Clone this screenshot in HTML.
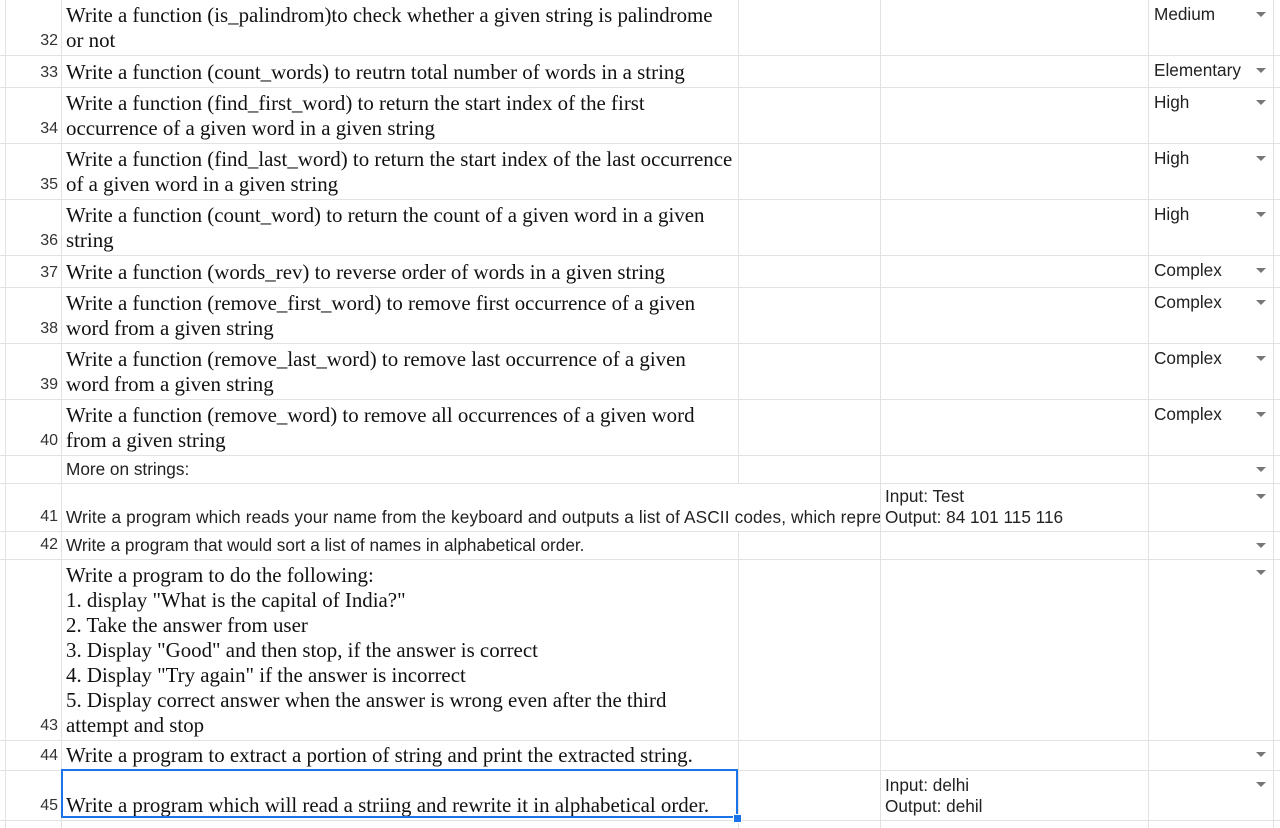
<!DOCTYPE html>
<html><head><meta charset="utf-8"><style>
body{margin:0;width:1280px;height:828px;overflow:hidden;background:#fff;position:relative;font-family:"Liberation Sans",Arial,sans-serif;color:#222}
.h{position:absolute;left:0;width:1280px;height:1px;background:#e2e2e2}
.v{position:absolute;top:0;height:828px;width:1px;background:#e2e2e2}
.c{position:absolute;display:flex;flex-direction:column;justify-content:flex-end;box-sizing:border-box;padding-bottom:2px;overflow:hidden;white-space:nowrap}
.s{font-family:"Liberation Serif","Times New Roman",serif;font-size:20.9px;line-height:25px;color:#111}
.n{font-size:16px;line-height:20px;text-align:right;color:#333;padding-bottom:4px}
.ss{font-size:17.2px;line-height:21px;padding-bottom:3px;color:#222}
.d{position:absolute;font-size:17.2px;color:#222}
.ar{position:absolute;width:0;height:0;border-left:5px solid transparent;border-right:5px solid transparent;border-top:5px solid #777}
</style></head><body>
<div class="v" style="left:5px"></div>
<div class="v" style="left:61px"></div>
<div class="v" style="left:738px"></div>
<div class="v" style="left:880px"></div>
<div class="v" style="left:1148px"></div>
<div class="v" style="left:1273px"></div>
<div class="h" style="top:55px"></div><div class="h" style="top:87px"></div><div class="h" style="top:143px"></div><div class="h" style="top:199px"></div><div class="h" style="top:255px"></div><div class="h" style="top:287px"></div><div class="h" style="top:343px"></div><div class="h" style="top:399px"></div><div class="h" style="top:455px"></div><div class="h" style="top:483px"></div><div class="h" style="top:531px"></div><div class="h" style="top:559px"></div><div class="h" style="top:740px"></div><div class="h" style="top:770px"></div><div class="h" style="top:820px"></div>

<div class="c n" style="top:0;height:55px;left:6px;width:52px">32</div>
<div class="c n" style="top:55px;height:32px;left:6px;width:52px">33</div>
<div class="c n" style="top:87px;height:56px;left:6px;width:52px">34</div>
<div class="c n" style="top:143px;height:56px;left:6px;width:52px">35</div>
<div class="c n" style="top:199px;height:56px;left:6px;width:52px">36</div>
<div class="c n" style="top:255px;height:32px;left:6px;width:52px">37</div>
<div class="c n" style="top:287px;height:56px;left:6px;width:52px">38</div>
<div class="c n" style="top:343px;height:56px;left:6px;width:52px">39</div>
<div class="c n" style="top:399px;height:56px;left:6px;width:52px">40</div>
<div class="c n" style="top:483px;height:48px;left:6px;width:52px">41</div>
<div class="c n" style="top:531px;height:28px;left:6px;width:52px">42</div>
<div class="c n" style="top:559px;height:181px;left:6px;width:52px">43</div>
<div class="c n" style="top:740px;height:30px;left:6px;width:52px">44</div>
<div class="c n" style="top:770px;height:50px;left:6px;width:52px">45</div>

<div class="c s" style="top:0;height:55px;left:66px;width:670px"><div>Write a function (is_palindrom)to check whether a given string is palindrome</div><div>or not</div></div>
<div class="c s" style="top:55px;height:32px;left:66px;width:670px">Write a function (count_words) to reutrn total number of words in a string</div>
<div class="c s" style="top:87px;height:56px;left:66px;width:670px"><div>Write a function (find_first_word) to return the start index of the first</div><div>occurrence of a given word in a given string</div></div>
<div class="c s" style="top:143px;height:56px;left:66px;width:672px"><div>Write a function (find_last_word) to return the start index of the last occurrence</div><div>of a given word in a given string</div></div>
<div class="c s" style="top:199px;height:56px;left:66px;width:670px"><div>Write a function (count_word) to return the count of a given word in a given</div><div>string</div></div>
<div class="c s" style="top:255px;height:32px;left:66px;width:670px">Write a function (words_rev) to reverse order of words in a given string</div>
<div class="c s" style="top:287px;height:56px;left:66px;width:670px"><div>Write a function (remove_first_word) to remove first occurrence of a given</div><div>word from a given string</div></div>
<div class="c s" style="top:343px;height:56px;left:66px;width:670px"><div>Write a function (remove_last_word) to remove last occurrence of a given</div><div>word from a given string</div></div>
<div class="c s" style="top:399px;height:56px;left:66px;width:670px"><div>Write a function (remove_word) to remove all occurrences of a given word</div><div>from a given string</div></div>
<div class="c ss" style="top:455px;height:28px;left:66px;width:670px">More on strings:</div>
<div class="c ss" style="top:484px;height:47px;left:62px;width:818px;padding-left:4px;background:#fff;letter-spacing:0.15px">Write a program which reads your name from the keyboard and outputs a list of ASCII codes, which repre</div>
<div class="c ss" style="top:531px;height:28px;left:66px;width:670px">Write a program that would sort a list of names in alphabetical order.</div>
<div class="c s" style="top:559px;height:181px;left:66px;width:670px"><div>Write a program to do the following:</div><div>1. display "What is the capital of India?"</div><div>2. Take the answer from user</div><div>3. Display "Good" and then stop, if the answer is correct</div><div>4. Display "Try again" if the answer is incorrect</div><div>5. Display correct answer when the answer is wrong even after the third</div><div>attempt and stop</div></div>
<div class="c s" style="top:740px;height:30px;left:66px;width:670px">Write a program to extract a portion of string and print the extracted string.</div>
<div class="c s" style="top:770px;height:50px;left:66px;width:670px">Write a program which will read a striing and rewrite it in alphabetical order.</div>

<div class="c ss" style="top:483px;height:48px;left:885px;width:262px"><div>Input: Test</div><div>Output: 84 101 115 116</div></div>
<div class="c ss" style="top:770px;height:50px;left:885px;width:262px"><div>Input: delhi</div><div>Output: dehil</div></div>

<div style="position:absolute;left:61px;top:769px;width:677px;height:49px;border:2px solid #1a73e8;box-sizing:border-box"></div>
<div style="position:absolute;left:733px;top:814px;width:7px;height:7px;background:#1a73e8;border:1px solid #fff"></div>

<div class="d" style="left:1154px;top:4px">Medium</div>
<div class="d" style="left:1154px;top:60px">Elementary</div>
<div class="d" style="left:1154px;top:92px">High</div>
<div class="d" style="left:1154px;top:148px">High</div>
<div class="d" style="left:1154px;top:204px">High</div>
<div class="d" style="left:1154px;top:260px">Complex</div>
<div class="d" style="left:1154px;top:292px">Complex</div>
<div class="d" style="left:1154px;top:348px">Complex</div>
<div class="d" style="left:1154px;top:404px">Complex</div>
<div class="ar" style="left:1256px;top:12px"></div>
<div class="ar" style="left:1256px;top:68px"></div>
<div class="ar" style="left:1256px;top:100px"></div>
<div class="ar" style="left:1256px;top:156px"></div>
<div class="ar" style="left:1256px;top:212px"></div>
<div class="ar" style="left:1256px;top:268px"></div>
<div class="ar" style="left:1256px;top:300px"></div>
<div class="ar" style="left:1256px;top:356px"></div>
<div class="ar" style="left:1256px;top:412px"></div>
<div class="ar" style="left:1256px;top:467px"></div>
<div class="ar" style="left:1256px;top:494px"></div>
<div class="ar" style="left:1256px;top:543px"></div>
<div class="ar" style="left:1256px;top:570px"></div>
<div class="ar" style="left:1256px;top:752px"></div>
<div class="ar" style="left:1256px;top:782px"></div>
</body></html>
